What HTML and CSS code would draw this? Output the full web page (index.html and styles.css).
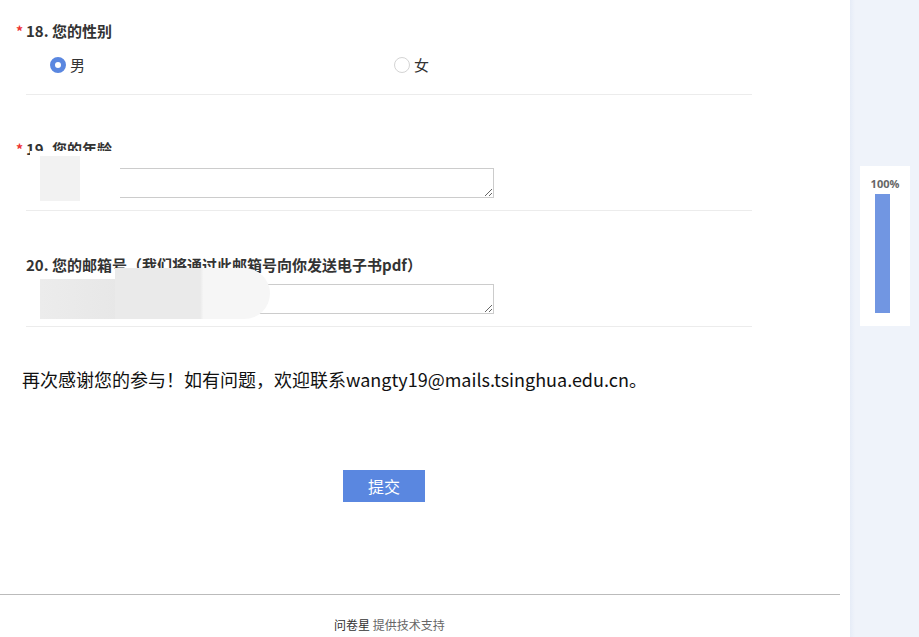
FILE: index.html
```html
<!DOCTYPE html>
<html lang="zh">
<head>
<meta charset="utf-8">
<title>问卷</title>
<link rel="stylesheet" href="styles.css">
</head>
<body>
<div class="page">
  <main class="main">
    <div class="form">
      <div class="question">
        <div class="q-title"><span class="req">*</span>18. 您的性别</div>
        <div class="options">
          <label class="option"><span class="radio checked"></span>男</label>
          <label class="option"><span class="radio"></span>女</label>
        </div>
      </div>
      <div class="question">
        <div class="q-title"><span class="req">*</span>19. 您的年龄</div>
        <div class="field"><textarea class="input"></textarea></div>
        <div class="mask mask-a"><span class="mask-grey"></span></div>
      </div>
      <div class="question">
        <div class="q-title">20. 您的邮箱号（我们将通过此邮箱号向你发送电子书pdf）</div>
        <div class="field"><textarea class="input"></textarea></div>
        <div class="mask mask-b"><span class="mask-dark"></span><span class="mask-light"></span></div>
      </div>
      <p class="thanks">再次感谢您的参与！如有问题，欢迎联系wangty19@mails.tsinghua.edu.cn。</p>
      <div class="submit-row"><button class="submit">提交</button></div>
    </div>
    <footer class="footer">
      <span class="brand">问卷星</span> <span class="support">提供技术支持</span>
    </footer>
  </main>
  <aside class="side">
    <div class="progress">
      <div class="pct">100%</div>
      <div class="bar"></div>
    </div>
  </aside>
</div>
</body>
</html>
```
FILE: styles.css
```css
* { box-sizing: border-box; }
html, body { margin: 0; padding: 0; }
body {
  font-family: "Noto Sans CJK SC", "Microsoft YaHei", "Liberation Sans", sans-serif;
  color: #333;
  background: #fff;
  height: 637px;
  overflow: hidden;
}
.page {
  display: flex;
  height: 637px;
}
.main {
  width: 850px;
  background: #fff;
  display: flex;
  flex-direction: column;
}
.form {
  width: 768px;
  padding-top: 21px;
}
.question {
  position: relative;
  margin-left: 26px;
  width: 726px;
  border-bottom: 1px solid #ececec;
  padding-bottom: 12px;
}
.question + .question {
  padding-top: 44px;
}
.q-title {
  font-size: 15px;
  font-weight: bold;
  line-height: 20px;
  height: 20px;
  color: #333;
  white-space: nowrap;
}
.req {
  color: #e33;
  display: inline-block;
  width: 10px;
  margin-left: -10px;
  font-size: 14px;
}
.options {
  display: flex;
  padding: 14px 0 7px 24px;
}
.option {
  width: 344px;
  display: flex;
  align-items: center;
  font-size: 15px;
  line-height: 20px;
  color: #333;
}
.radio {
  width: 16px;
  height: 16px;
  border-radius: 50%;
  border: 1px solid #d4d4d4;
  background: #fff;
  margin-right: 4px;
  flex: none;
}
.radio.checked {
  border: 5px solid #5a87e0;
}
.field {
  padding: 9px 0 0 14px;
}
.input {
  display: block;
  width: 454px;
  height: 30px;
  border: 1px solid #ccc;
  resize: vertical;
  margin: 0;
  padding: 0;
  font: inherit;
}
.mask {
  position: absolute;
  background: #fff;
}
.mask-a {
  left: 4px;
  top: 56px;
  width: 90px;
  height: 50px;
}
.mask-grey {
  position: absolute;
  left: 10px;
  top: 5px;
  width: 40px;
  height: 45px;
  background: #f2f2f2;
}
.mask-b {
  left: 4px;
  top: 53px;
  width: 240px;
  height: 57px;
  background: transparent;
}
.mask-dark {
  position: absolute;
  left: 10px;
  top: 15px;
  width: 160px;
  height: 40px;
  background: linear-gradient(90deg, #ececec, #e6e6e6 60%, #e9e9e9);
}
.mask-light {
  position: absolute;
  left: 85px;
  top: 4px;
  width: 155px;
  height: 51px;
  background: linear-gradient(90deg, #eaeaea 0, #eaeaea 55%, #f6f6f6 57%, #f6f6f6 100%);
  border-radius: 0 26px 26px 0;
}
.thanks {
  margin: 40px 0 0 22px;
  font-size: 18px;
  line-height: 24px;
  color: #111;
  white-space: nowrap;
}
.submit-row {
  display: flex;
  justify-content: center;
  padding-top: 79px;
}
.submit {
  width: 82px;
  height: 32px;
  border: 0;
  background: #5a87e0;
  color: #fff;
  font-family: inherit;
  font-size: 16px;
  padding: 0;
}
.footer {
  margin-top: auto;
  width: 840px;
  border-top: 1px solid #bbb;
  height: 43px;
  padding-left: 334px;
  padding-top: 21px;
  font-size: 12px;
  line-height: 18px;
}
.brand { color: #333; }
.support { color: #666; }
.side {
  flex: 1;
  background: linear-gradient(90deg, #e6ecf7 0, #eff3fa 5px, #eff3fa 100%);
  padding: 166px 0 0 10px;
}
.progress {
  width: 50px;
  height: 160px;
  background: #fff;
  display: flex;
  flex-direction: column;
  align-items: center;
  padding-top: 11px;
}
.pct {
  font-size: 11px;
  font-weight: bold;
  color: #666;
  line-height: 14px;
  height: 17px;
  font-family: "Open Sans", "Liberation Sans", sans-serif;
}
.bar {
  width: 15px;
  height: 119px;
  margin-right: 5px;
  background: #7196e2;
}
```
